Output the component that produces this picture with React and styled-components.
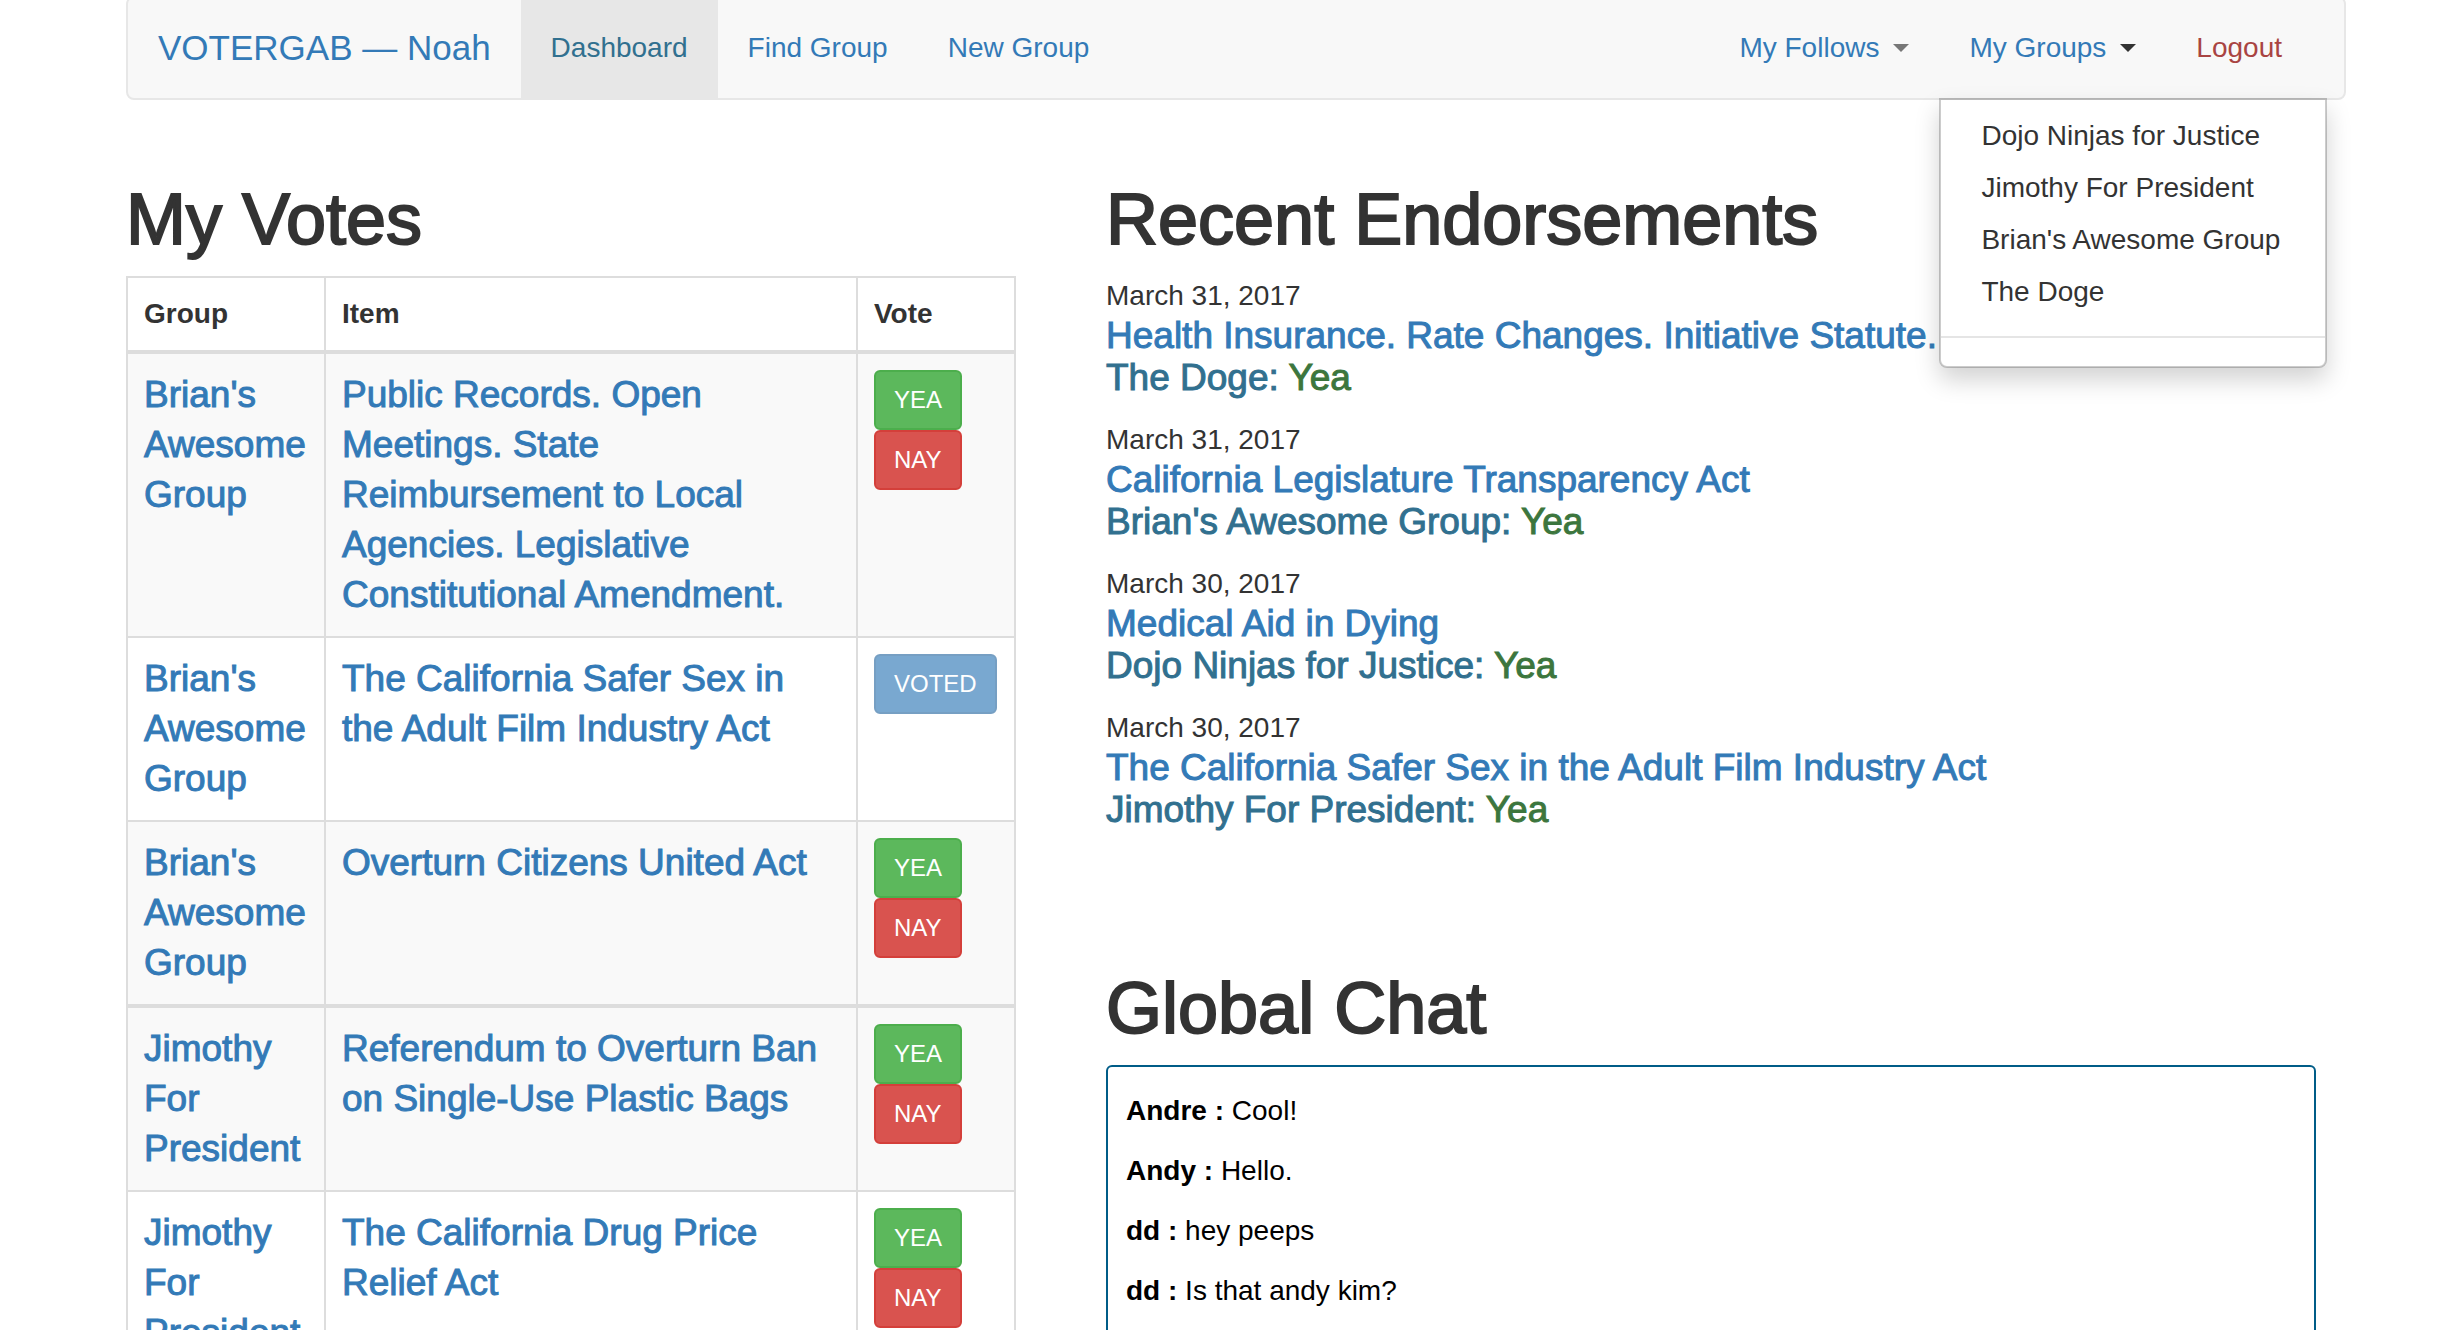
import React from "react";
import styled, { createGlobalStyle } from "styled-components";

const GlobalStyle = createGlobalStyle`
  *, *::before, *::after { box-sizing: border-box; }
  html { scrollbar-width: none; }
  body {
    margin: 0;
    background: #fff;
    color: #333;
    font-family: "Helvetica Neue", Helvetica, "Liberation Sans", Arial, sans-serif;
    font-size: 28px;
    line-height: 40px;
  }
  a { color: #337ab7; text-decoration: none; }
`;

const Page = styled.div`
  padding: 0 118px 0 126px;
`;

const Navbar = styled.nav`
  display: flex;
  justify-content: space-between;
  margin-top: -4px;
  padding-right: 32px;
  background: #f8f8f8;
  border: 2px solid #e7e7e7;
  border-radius: 8px;
`;

const NavGroup = styled.div`
  display: flex;
`;

const NavItem = styled.div`
  position: relative;
`;

const Brand = styled.a`
  padding: 30px;
  font-size: 35px;
`;

const tones = { link: "#337ab7", info: "#31708f", danger: "#a94442" };

const NavLink = styled.a`
  display: block;
  padding: 30px;
  color: ${(p) => tones[p.$tone || "link"]};
  background: ${(p) => (p.$active ? "#e7e7e7" : "transparent")};
`;

const NavToggle = styled.button`
  display: flex;
  align-items: center;
  gap: 14px;
  padding: 30px;
  border: 0;
  background: none;
  color: #337ab7;
  font: inherit;
  cursor: pointer;
`;

const Caret = styled.span`
  border-top: 8px solid ${(p) => (p.$open ? "#333" : "#777")};
  border-left: 8px solid transparent;
  border-right: 8px solid transparent;
`;

const Menu = styled.ul`
  position: absolute;
  top: 100%;
  left: 0;
  z-index: 10;
  min-width: 388px;
  margin: 0;
  padding: 10px 0;
  list-style: none;
  white-space: nowrap;
  background: #fff;
  background-clip: padding-box;
  border: 2px solid rgba(0, 0, 0, 0.2);
  border-radius: 0 0 8px 8px;
  box-shadow: 0 12px 24px rgba(0, 0, 0, 0.175);
`;

const MenuLink = styled.a`
  display: block;
  padding: 6px 40px;
  color: #333;
`;

const Divider = styled.li`
  height: 2px;
  margin: 18px 0;
  background: #e5e5e5;
`;

const Columns = styled.main`
  display: grid;
  grid-template-columns: minmax(0, 890fr) minmax(0, 1210fr);
  column-gap: 90px;
  align-items: start;
  padding: 80px 30px 0 0;
`;

const Title = styled.h1`
  margin: 0 0 17px;
  font-size: 72px;
  font-weight: 400;
  line-height: 79px;
  -webkit-text-stroke: 2px currentColor;
`;

const Table = styled.table`
  width: 100%;
  table-layout: fixed;
  border-collapse: collapse;
`;

const Col = styled.col`
  width: ${(p) => p.$width};
`;

const HeadCell = styled.th`
  padding: 16px;
  text-align: left;
  border: 2px solid #ddd;
  border-bottom-width: 4px;
`;

const Body = styled.tbody`
  & + & { border-top: 4px solid #ddd; }
  tr:nth-child(odd) { background: #f9f9f9; }
`;

const Cell = styled.td`
  padding: 16px;
  vertical-align: top;
  border: 2px solid #ddd;
`;

const CellTitle = styled.a`
  display: block;
  font-size: 37px;
  line-height: 50px;
  -webkit-text-stroke: 1px currentColor;
`;

const Ballot = styled.div`
  display: flex;
  flex-direction: column;
  align-items: flex-start;
`;

const kinds = {
  yea: ["#5cb85c", "#4cae4c"],
  nay: ["#d9534f", "#d43f3a"],
  voted: ["#337ab7", "#2e6da4"],
};

const VoteButton = styled.button`
  padding: 10px 18px;
  border: 2px solid ${(p) => kinds[p.$kind][1]};
  border-radius: 6px;
  background: ${(p) => kinds[p.$kind][0]};
  color: #fff;
  font-family: inherit;
  font-size: 24px;
  line-height: 36px;
  cursor: pointer;
  &:disabled { opacity: 0.65; cursor: not-allowed; }
`;

const Endorsement = styled.article`
  margin-bottom: 21px;
`;

const EndorsementDate = styled.time`
  display: block;
  line-height: 39px;
`;

const EndorsementLine = styled.div`
  color: #31708f;
  font-size: 37px;
  line-height: 42px;
  -webkit-text-stroke: 1px currentColor;
`;

const Yea = styled.span`
  color: #3c763d;
`;

const Chat = styled.section`
  padding-top: 117px;
`;

const ChatBox = styled.div`
  min-height: 400px;
  padding: 24px 18px;
  border: 2px solid #005c87;
  border-radius: 6px;
  color: #000;
`;

const Message = styled.p`
  margin: 0 0 20px;
`;

const myGroups = ["Dojo Ninjas for Justice", "Jimothy For President", "Brian's Awesome Group", "The Doge"];

const votes = [
  [
    {
      group: "Brian's Awesome Group",
      item: "Public Records. Open Meetings. State Reimbursement to Local Agencies. Legislative Constitutional Amendment.",
    },
    { group: "Brian's Awesome Group", item: "The California Safer Sex in the Adult Film Industry Act", voted: true },
    { group: "Brian's Awesome Group", item: "Overturn Citizens United Act" },
  ],
  [
    { group: "Jimothy For President", item: "Referendum to Overturn Ban on Single-Use Plastic Bags" },
    { group: "Jimothy For President", item: "The California Drug Price Relief Act" },
  ],
];

const endorsements = [
  { date: "March 31, 2017", item: "Health Insurance. Rate Changes. Initiative Statute.", group: "The Doge" },
  { date: "March 31, 2017", item: "California Legislature Transparency Act", group: "Brian's Awesome Group" },
  { date: "March 30, 2017", item: "Medical Aid in Dying", group: "Dojo Ninjas for Justice" },
  {
    date: "March 30, 2017",
    item: "The California Safer Sex in the Adult Film Industry Act",
    group: "Jimothy For President",
  },
];

const messages = [
  ["Andre", "Cool!"],
  ["Andy", "Hello."],
  ["dd", "hey peeps"],
  ["dd", "Is that andy kim?"],
];

function VoteRow({ group, item, voted }) {
  return (
    <tr>
      <Cell><CellTitle href="#">{group}</CellTitle></Cell>
      <Cell><CellTitle href="#">{item}</CellTitle></Cell>
      <Cell>
        <Ballot>
          {voted ? (
            <VoteButton $kind="voted" disabled>VOTED</VoteButton>
          ) : (
            <>
              <VoteButton $kind="yea">YEA</VoteButton>
              <VoteButton $kind="nay">NAY</VoteButton>
            </>
          )}
        </Ballot>
      </Cell>
    </tr>
  );
}

export default function App() {
  return (
    <>
      <GlobalStyle />
      <Page>
        <Navbar>
          <NavGroup>
            <Brand href="#">VOTERGAB — Noah</Brand>
            <NavLink href="#" $tone="info" $active>Dashboard</NavLink>
            <NavLink href="#">Find Group</NavLink>
            <NavLink href="#">New Group</NavLink>
          </NavGroup>
          <NavGroup>
            <NavItem>
              <NavToggle aria-expanded="false">My Follows<Caret /></NavToggle>
            </NavItem>
            <NavItem>
              <NavToggle aria-expanded="true">My Groups<Caret $open /></NavToggle>
              <Menu>
                {myGroups.map((name) => (
                  <li key={name}><MenuLink href="#">{name}</MenuLink></li>
                ))}
                <Divider role="separator" />
              </Menu>
            </NavItem>
            <NavLink href="#" $tone="danger">Logout</NavLink>
          </NavGroup>
        </Navbar>

        <Columns>
          <section>
            <Title>My Votes</Title>
            <Table>
              <colgroup>
                <Col $width="198px" />
                <Col />
                <Col $width="158px" />
              </colgroup>
              <thead>
                <tr>
                  <HeadCell scope="col">Group</HeadCell>
                  <HeadCell scope="col">Item</HeadCell>
                  <HeadCell scope="col">Vote</HeadCell>
                </tr>
              </thead>
              {votes.map((rows, i) => (
                <Body key={i}>
                  {rows.map((row) => <VoteRow key={row.item} {...row} />)}
                </Body>
              ))}
            </Table>
          </section>

          <div>
            <section>
              <Title>Recent Endorsements</Title>
              {endorsements.map((e) => (
                <Endorsement key={e.item}>
                  <EndorsementDate>{e.date}</EndorsementDate>
                  <EndorsementLine><a href="#">{e.item}</a></EndorsementLine>
                  <EndorsementLine>{e.group}: <Yea>Yea</Yea></EndorsementLine>
                </Endorsement>
              ))}
            </section>
            <Chat>
              <Title as="h2">Global Chat</Title>
              <ChatBox>
                {messages.map(([who, text]) => (
                  <Message key={text}><b>{who} :</b> {text}</Message>
                ))}
              </ChatBox>
            </Chat>
          </div>
        </Columns>
      </Page>
    </>
  );
}
